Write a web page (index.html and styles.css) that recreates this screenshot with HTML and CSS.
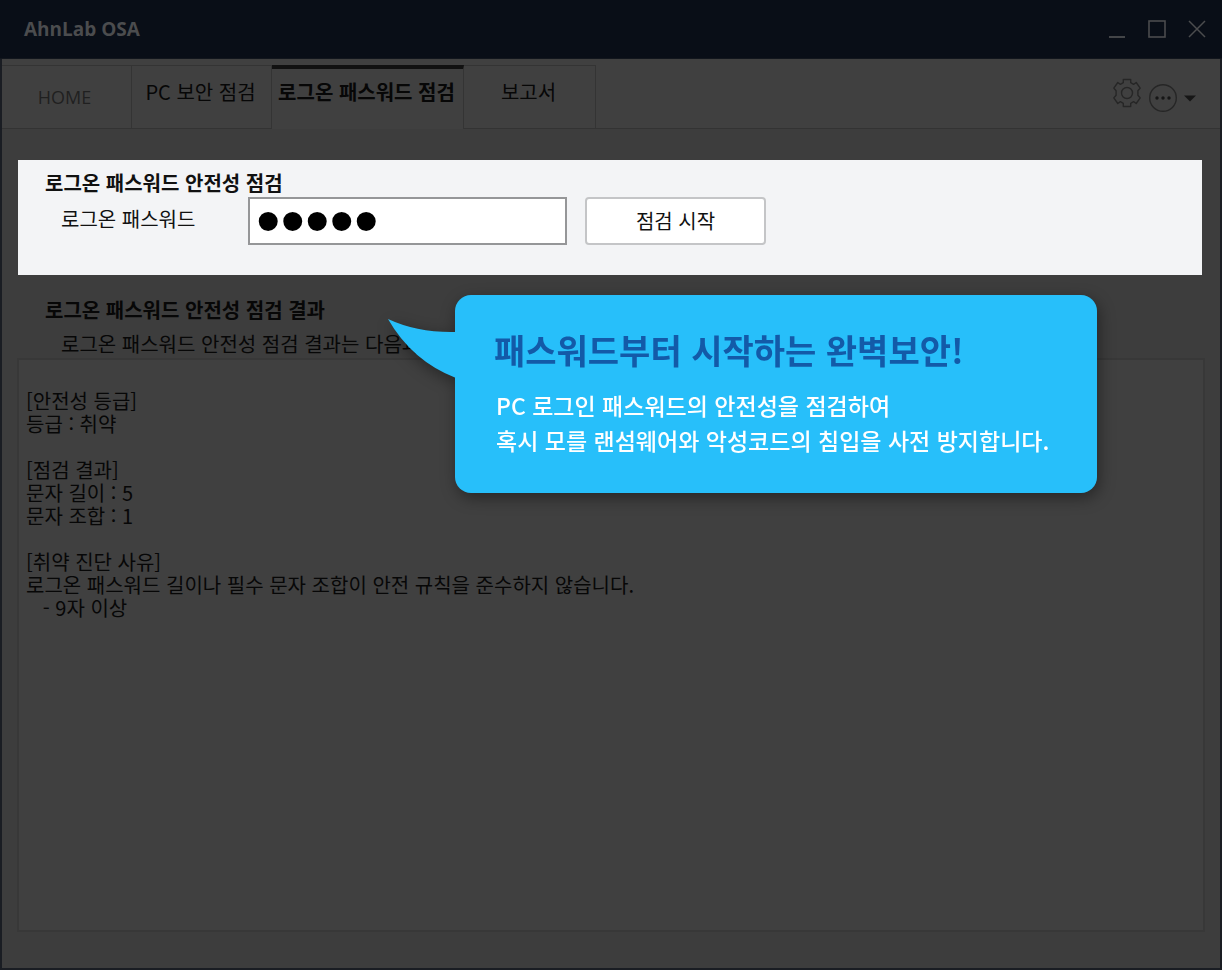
FILE: index.html
```html
<!DOCTYPE html>
<html lang="ko">
<head>
<meta charset="utf-8">
<meta name="viewport" content="width=device-width, initial-scale=1">
<title>AhnLab OSA</title>
<link rel="stylesheet" href="styles.css">
</head>
<body>
<div class="window">
  <header class="titlebar">
    <h1 class="app-name">AhnLab OSA</h1>
    <div class="window-controls">
      <button class="icon-button" type="button" aria-label="최소화">
        <svg width="18" height="18" viewBox="0 0 18 18"><path d="M1 17h16" stroke="currentColor" stroke-width="1.8"/></svg>
      </button>
      <button class="icon-button" type="button" aria-label="최대화">
        <svg width="18" height="18" viewBox="0 0 18 18"><rect x="1" y="1" width="16" height="16" fill="none" stroke="currentColor" stroke-width="1.6"/></svg>
      </button>
      <button class="icon-button" type="button" aria-label="닫기">
        <svg width="18" height="18" viewBox="0 0 18 18"><path d="M1 1l16 16M17 1L1 17" stroke="currentColor" stroke-width="1.5"/></svg>
      </button>
    </div>
  </header>

  <nav class="tabbar">
    <button class="tab tab-home" type="button">HOME</button>
    <button class="tab tab-pc" type="button">PC 보안 점검</button>
    <button class="tab tab-active" type="button" aria-current="page">로그온 패스워드 점검</button>
    <button class="tab tab-report" type="button">보고서</button>
    <div class="tools">
      <button class="icon-button tool-gear" type="button" aria-label="설정">
        <svg width="30" height="30" viewBox="0 0 30 30" fill="none" stroke="currentColor" stroke-width="1.4" stroke-linejoin="round">
          <path d="M11.3 1.5h7.4v3.2l2.9 1.6 2.6-1.8 4 5.6-2.3 2.7v4.4l2.3 2.7-4 5.6-2.6-1.8-2.9 1.6v3.2h-7.4v-3.2l-2.9-1.6-2.6 1.8-4-5.6 2.3-2.7v-4.4l-2.3-2.7 4-5.6 2.6 1.8 2.9-1.6z"/>
          <circle cx="15" cy="15" r="5.5"/>
        </svg>
      </button>
      <button class="icon-button tool-more" type="button" aria-label="더 보기">
        <svg width="48" height="30" viewBox="0 0 48 30">
          <circle cx="15" cy="15" r="13.3" fill="none" stroke="currentColor" stroke-width="1.4"/>
          <g fill="#161616"><circle cx="9" cy="15" r="1.7"/><circle cx="15" cy="15" r="1.7"/><circle cx="21" cy="15" r="1.7"/><path d="M36 12.5h12l-6 6z"/></g>
        </svg>
      </button>
    </div>
  </nav>

  <main class="content">
    <form class="check-panel">
      <h2 class="heading">로그온 패스워드 안전성 점검</h2>
      <div class="field-row">
        <label class="field-label" for="password">로그온 패스워드</label>
        <input class="password" id="password" type="password" value="12345">
        <button class="start" type="button">점검 시작</button>
      </div>
    </form>

    <section class="result">
      <h2 class="heading">로그온 패스워드 안전성 점검 결과</h2>
      <label class="result-label" for="log">로그온 패스워드 안전성 점검 결과는 다음과</label>
      <textarea class="log" id="log" readonly>
[안전성 등급]
등급 : 취약

[점검 결과]
문자 길이 : 5
문자 조합 : 1

[취약 진단 사유]
로그온 패스워드 길이나 필수 문자 조합이 안전 규칙을 준수하지 않습니다.
   - 9자 이상</textarea>
    </section>
  </main>

  <aside class="callout">
    <svg class="callout-tail" width="68" height="60" viewBox="0 0 68 60"><path d="M0 0Q30 14 68 13V59Q24 42 0 0z" fill="#27bffa"/></svg>
    <h2 class="callout-title">패스워드부터 시작하는 완벽보안!</h2>
    <p class="callout-text">PC 로그인 패스워드의 안전성을 점검하여<br>혹시 모를 랜섬웨어와 악성코드의 침입을 사전 방지합니다.</p>
  </aside>
</div>
</body>
</html>
```
FILE: styles.css
```css
* { box-sizing: border-box; }

body {
  margin: 0;
  background: #3d3d3d;
  color: #070707;
  font-family: "Noto Sans CJK KR", sans-serif;
  font-size: 20px;
}

button, input, textarea { font: inherit; color: inherit; }
h1, h2, p { margin: 0; }

.window {
  position: relative;
  display: flex;
  flex-direction: column;
  min-height: 100vh;
  border: 2px solid #1a1d23;
  border-top: 0;
}

.titlebar {
  display: flex;
  align-items: center;
  justify-content: space-between;
  height: 59px;
  margin: 0 -2px;
  padding: 0 16px 0 24px;
  background: #090e17;
  border-bottom: 1px solid #12161d;
}

.app-name {
  color: #4b4c4e;
  font: 700 19px/28px "Open Sans", sans-serif;
}

.window-controls { display: flex; gap: 22px; color: #4b4c4e; }

.icon-button {
  display: block;
  padding: 0;
  border: 0;
  background: none;
  line-height: 0;
}

.tabbar {
  display: flex;
  height: 70px;
  padding-top: 6px;
  background: #404040;
  border-bottom: 1px solid #333;
}

.tab {
  padding: 0 8px 12px 6px;
  border: 1px solid #343434;
  border-left-width: 0;
  border-bottom: 0;
  background: none;
  white-space: nowrap;
}

.tab-home {
  width: 130px;
  padding: 0 4px 0 0;
  color: #202020;
  font: 18px/28px "Open Sans", sans-serif;
}

.tab-pc { width: 140px; }

.tab-active {
  width: 192px;
  margin-bottom: -1px;
  border-top: 4px solid #111;
  background: #404040;
  padding-bottom: 16px;
  font-weight: 700;
}

.tab-report { width: 132px; }

.tools { display: flex; margin-left: auto; padding-right: 24px; gap: 6px; color: #262626; }
.tool-gear { padding: 13px 0 20px; }
.tool-more { padding: 18px 0 15px; }

.content {
  display: flex;
  flex: 1;
  flex-direction: column;
  padding: 31px 15px 36px;
}

.check-panel {
  margin: 0 3px 0 1px;
  padding: 8px 27px 30px;
  background: #f3f4f6;
  color: #111;
}

.heading { font-size: 20px; line-height: 29px; font-weight: 700; }

.field-row { display: flex; align-items: center; padding-left: 16px; }
.field-label { width: 187px; margin-top: -6px; }

.password {
  width: 319px;
  height: 48px;
  padding: 0 6px;
  border: 2px solid #959698;
  border-radius: 0;
  background: #fff;
  color: #000;
  font-family: "Liberation Sans", sans-serif;
  font-size: 70px;
  line-height: 44px;
}

.start {
  width: 181px;
  height: 48px;
  margin-left: 18px;
  padding: 0 0 2px;
  border: 2px solid #c4c5c7;
  border-radius: 4px;
  background: #fff;
}

.result { display: flex; flex: 1; flex-direction: column; padding-top: 20px; }
.result .heading { margin-left: 28px; }
.result-label { margin: 6px 0 0 44px; line-height: 28px; }

.log {
  display: block;
  flex: 1;
  width: 100%;
  min-height: 320px;
  padding: 29px 7px;
  border: 2px solid #383838;
  outline: 0;
  resize: none;
  background: #404040;
  line-height: 23px;
}

.callout {
  position: absolute;
  top: 295px;
  left: 453px;
  padding: 33px 48px 35px 41px;
  border-radius: 16px;
  background: #27bffa;
  color: #fff;
  filter: drop-shadow(2px 5px 8px rgba(0, 0, 0, 0.4));
}

.callout-tail { position: absolute; top: 24px; left: -67px; }
.callout-title { margin-left: -2px; color: #135aa8; font-size: 34px; line-height: 44px; font-weight: 700; }
.callout-text { margin-top: 16px; font-size: 23px; line-height: 35px; font-weight: 500; white-space: nowrap; }
```
